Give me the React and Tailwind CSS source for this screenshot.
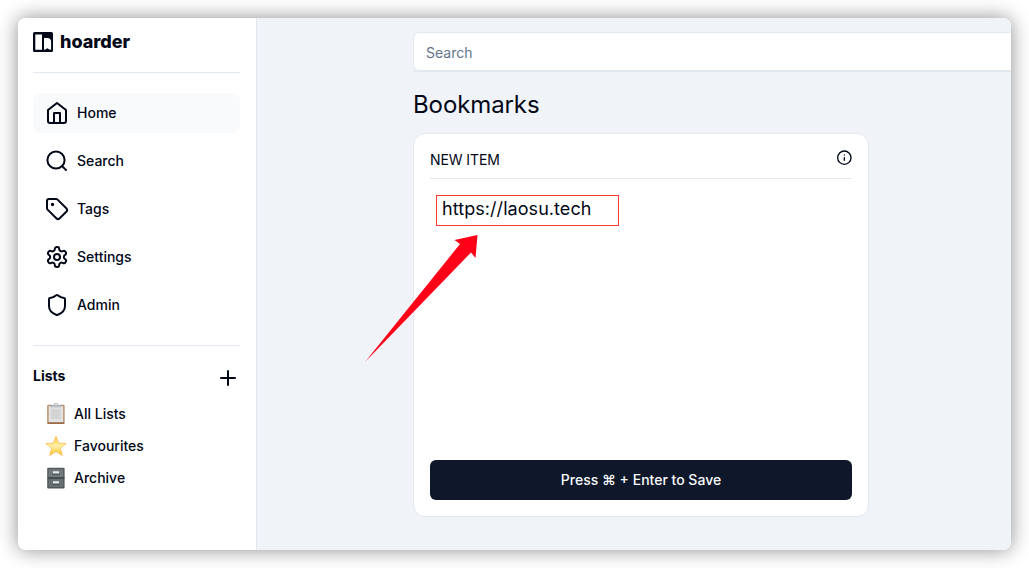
import React from "react";

function Icon({ size = 24, children }) {
  return (
    <svg width={size} height={size} viewBox="0 0 24 24" fill="none" stroke="currentColor" strokeWidth="2" strokeLinecap="round" strokeLinejoin="round" className="shrink-0">
      {children}
    </svg>
  );
}

const navItems = [
  {
    label: "Home",
    icon: (
      <Icon>
        <path d="m3 9 9-7 9 7v11a2 2 0 0 1-2 2H5a2 2 0 0 1-2-2z" />
        <path d="M9 22V12h6v10" />
      </Icon>
    ),
  },
  {
    label: "Search",
    icon: (
      <Icon>
        <circle cx="11" cy="11" r="8.6" />
        <path d="m21 21-3.900-3.900" />
      </Icon>
    ),
  },
  {
    label: "Tags",
    icon: (
      <Icon>
        <path d="M12.586 2.586A2 2 0 0 0 11.172 2H4a2 2 0 0 0-2 2v7.172a2 2 0 0 0 .586 1.414l8.704 8.704a2.426 2.426 0 0 0 3.42 0l6.58-6.58a2.426 2.426 0 0 0 0-3.42z" />
        <circle cx="7.5" cy="7.5" r=".7" fill="currentColor" />
      </Icon>
    ),
  },
  {
    label: "Settings",
    icon: (
      <Icon>
        <path d="M12.22 2h-.44a2 2 0 0 0-2 2v.18a2 2 0 0 1-1 1.73l-.43.25a2 2 0 0 1-2 0l-.15-.08a2 2 0 0 0-2.73.73l-.22.38a2 2 0 0 0 .73 2.73l.15.1a2 2 0 0 1 1 1.72v.51a2 2 0 0 1-1 1.74l-.15.09a2 2 0 0 0-.73 2.73l.22.38a2 2 0 0 0 2.73.73l.15-.08a2 2 0 0 1 2 0l.43.25a2 2 0 0 1 1 1.73V20a2 2 0 0 0 2 2h.44a2 2 0 0 0 2-2v-.18a2 2 0 0 1 1-1.73l.43-.25a2 2 0 0 1 2 0l.15.08a2 2 0 0 0 2.73-.73l.22-.39a2 2 0 0 0-.73-2.73l-.15-.08a2 2 0 0 1-1-1.74v-.5a2 2 0 0 1 1-1.74l.15-.09a2 2 0 0 0 .73-2.73l-.22-.38a2 2 0 0 0-2.73-.73l-.15.08a2 2 0 0 1-2 0l-.43-.25a2 2 0 0 1-1-1.73V4a2 2 0 0 0-2-2z" />
        <circle cx="12" cy="12" r="3" />
      </Icon>
    ),
  },
  {
    label: "Admin",
    icon: (
      <Icon>
        <path d="M20 13c0 5-3.500 7.500-7.660 8.950a1 1 0 0 1-.67-.01C7.500 20.500 4 18 4 13V6a1 1 0 0 1 1-1c2 0 4.500-1.200 6.240-2.720a1.170 1.170 0 0 1 1.520 0C14.510 3.810 17 5 19 5a1 1 0 0 1 1 1z" />
      </Icon>
    ),
  },
];

function Clipboard() {
  return (
    <svg width="20" height="22" viewBox="0 0 20 22">
      <rect x="1.200" y="1.800" width="17.400" height="19.200" rx="1.300" fill="#b98d68" />
      <path d="M1.500 20.300h16.800" stroke="#94694b" strokeWidth="1.200" />
      <rect x="2.600" y="3" width="14.600" height="16" fill="#e2e2e2" />
      <rect x="5" y="6" width="9.800" height="10" fill="#d4d4d4" />
      <path d="M5 2h3a2 2 0 0 1 4 0h3l1 2.200H4z" fill="#b4bac0" />
      <circle cx="10" cy="1.700" r=".7" fill="#fff" />
    </svg>
  );
}

function Star() {
  return (
    <svg width="22" height="22" viewBox="0 0 22 22">
      <defs>
        <linearGradient id="star" x1="0" y1="0" x2="0" y2="1">
          <stop offset="0" stopColor="#fbc63d" />
          <stop offset=".5" stopColor="#fff0a8" />
          <stop offset="1" stopColor="#ffc420" />
        </linearGradient>
      </defs>
      <path d="m11 1.200 2.700 6.900 7.500.4-5.800 4.800 1.900 7.200-6.300-4-6.300 4 1.900-7.200L.8 8.500l7.500-.4z" fill="url(#star)" stroke="#f7b548" strokeWidth=".7" strokeLinejoin="round" />
    </svg>
  );
}

function Cabinet() {
  return (
    <svg width="20" height="22" viewBox="0 0 20 22">
      <rect x="1.200" y=".7" width="17.400" height="20.800" rx="1" fill="#51595d" />
      <rect x="2.600" y="2.200" width="14.600" height="8" fill="#727a7e" />
      <rect x="2.600" y="11.900" width="14.600" height="8" fill="#687074" />
      <path d="M1.500 11h17" stroke="#353d41" strokeWidth="1" />
      <path d="M7 4.200h6v2.200H7zM7 14.200h6v2.200H7z" fill="#e8eaeb" />
      <path d="M6.500 7.300h7M6.500 17.300h7" stroke="#444c50" strokeWidth="1" />
    </svg>
  );
}

const lists = [
  { label: "All Lists", icon: <Clipboard /> },
  { label: "Favourites", icon: <Star /> },
  { label: "Archive", icon: <Cabinet /> },
];

function Sidebar() {
  return (
    <aside className="flex w-[239px] shrink-0 flex-col border-r border-[#e2e8f0] bg-white pr-4 pl-[15px]">
      <div className="flex h-[55px] items-start gap-[7px] border-b border-[#e2e8f0] pt-3.5">
        <svg width="20" height="20" viewBox="0 0 20 20" className="shrink-0">
          <rect width="20" height="20" rx="1.500" fill="#020817" />
          <path d="M2.300 2.500h6.700v15.200H2.300z" fill="#fff" />
          <path d="M11 6h3.500c2.200 0 3.600 1.500 3.600 3.500v8.300l-1.800-.2-1.900-1.300-1.800 1.300-1.600.2z" fill="#fff" />
        </svg>
        <span className="-mt-[3px] font-[Inter,sans-serif] text-[18px] leading-[26px] font-extrabold tracking-[-0.05px]">hoarder</span>
      </div>
      <nav className="mt-5 flex flex-col gap-2">
        {navItems.map((item, i) => (
          <a key={item.label} className={i === 0 ? "flex h-10 items-center gap-2 rounded-lg bg-[#f8fafc] px-3" : "flex h-10 items-center gap-2 rounded-lg px-3"}>
            {item.icon}
            <span>{item.label}</span>
          </a>
        ))}
      </nav>
      <div className="mt-5 flex items-start justify-between border-t border-[#e2e8f0] pt-5">
        <span className="font-bold">Lists</span>
        <Icon>
          <path d="M5 12h14M12 5v14" />
        </Icon>
      </div>
      <div className="mt-2 flex flex-col">
        {lists.map((list) => (
          <a key={list.label} className="flex h-8 items-center gap-[7.500px] pl-[11.500px]">
            <span className="flex w-[22px] justify-center">{list.icon}</span>
            <span>{list.label}</span>
          </a>
        ))}
      </div>
    </aside>
  );
}

export default function App() {
  return (
    <div className="h-[568px] w-[1029px] overflow-hidden bg-white p-[18px] font-[Inter,sans-serif] text-sm font-medium text-[#020817]">
      <div className="h-[532px] w-[993px] rounded-lg shadow-[0_0_20px_rgba(0,0,0,0.45)]">
        <div className="flex h-full overflow-hidden rounded-lg bg-[#f0f4f9]">
          <Sidebar />
          <main className="flex min-w-0 flex-1 flex-col pt-3.5 pl-[156px] font-normal">
            <div className="border-b border-[#e2e8f0]">
              <div className="flex h-[39px] items-center rounded-l-md border border-r-0 border-[#e2e8f0] bg-white px-3 pt-[3px] text-[#64748b]">Search</div>
            </div>
            <h1 className="mt-[17px] text-2xl leading-8 tracking-[-0.1px]">Bookmarks</h1>
            <section className="mt-3 flex h-[384px] w-[456px] flex-col rounded-xl border border-[#e2e8f0] bg-white p-4">
              <div className="flex h-[29px] items-start justify-between border-b border-[#e2e8f0]">
                <span className="leading-5 tracking-[-0.1px]">NEW ITEM</span>
                <Icon size={16}>
                  <circle cx="12.500" cy="11.500" r="10" />
                  <path d="M12.500 15.500v-4M12.500 7.500h.01" />
                </Icon>
              </div>
              <div className="relative mt-4 ml-1.5 h-[31px] w-[183px] border border-[#ff3b2f] pl-[5px] text-lg leading-[26px] tracking-[0.06px]">
                https://laosu.tech
                <svg width="116" height="130" viewBox="0 0 116 130" className="pointer-events-none absolute top-[37px] left-[-73px]">
                  <path d="M1 129 96 11l-5.500-4L113.500 2l-2 23-4.500-5.500z" fill="#ff0018" />
                </svg>
              </div>
              <button className="mt-auto h-10 w-full rounded-md bg-[#0f172a] font-medium text-[#f8fafc]">Press ⌘ + Enter to Save</button>
            </section>
          </main>
        </div>
      </div>
    </div>
  );
}
